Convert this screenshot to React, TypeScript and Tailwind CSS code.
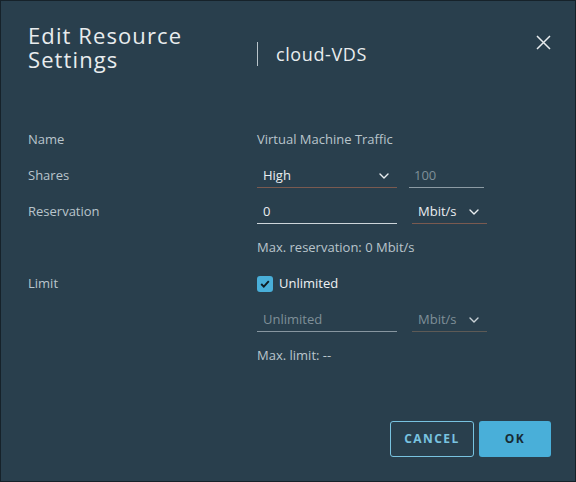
import React from "react";

const Chevron = ({ className = "" }: { className?: string }) => (
  <svg width="10" height="6" viewBox="0 0 10 6" className={className} fill="none">
    <path d="M1 1l4 4 4-4" stroke="currentColor" strokeWidth="1.4" strokeLinecap="round" strokeLinejoin="round" />
  </svg>
);

export default function App() {
  return (
    <div
      className="w-[576px] h-[482px] bg-[#293f4d] border border-[#16222a] flex flex-col text-[13px]"
      style={{ fontFamily: "'Open Sans', 'Noto Sans', sans-serif" }}
    >
      {/* Header */}
      <div className="flex items-start pl-[27px] pr-[24px] pt-[22px] h-[121px]">
        <div className="w-[229px] text-[22px] leading-[24px] tracking-[1.1px] text-[#e8ecee]">
          Edit Resource
          <br />
          Settings
        </div>
        <div className="flex items-center h-[24px] mt-[19px]">
          <div className="w-px h-[24px] bg-[#b9c4ca]" />
          <div className="ml-[18px] text-[18px] leading-[24px] tracking-[0.6px] text-[#e8ecee]">cloud-VDS</div>
        </div>
        <button className="ml-auto mt-[12px] text-[#e8ecee]">
          <svg width="15" height="15" viewBox="0 0 15 15" fill="none">
            <path d="M1 1l13 13M14 1L1 14" stroke="currentColor" strokeWidth="1.5" />
          </svg>
        </button>
      </div>

      {/* Form */}
      <div className="flex flex-col pl-[27px]">
        <div className="flex items-center h-9">
          <div className="w-[229px] text-[#b9c5cc]">Name</div>
          <div className="text-[#b9c5cc]">Virtual Machine Traffic</div>
        </div>

        <div className="flex items-center h-9">
          <div className="w-[229px] text-[#b9c5cc]">Shares</div>
          <div className="w-[140px] h-6 flex items-center justify-between pl-[6px] pr-[8px] border-b border-[#7a5a50] text-[#e9edf0]">
            <span>High</span>
            <Chevron />
          </div>
          <div className="ml-[12px] w-[75px] h-6 flex items-center pl-[5px] border-b border-[#8c9ba4] text-[#7f8f98]">
            100
          </div>
        </div>

        <div className="flex items-center h-9">
          <div className="w-[229px] text-[#b9c5cc]">Reservation</div>
          <div className="w-[140px] h-6 flex items-center pl-[6px] border-b border-[#cdd5da] text-[#e9edf0]">0</div>
          <div className="ml-[15px] w-[75px] h-6 flex items-center justify-between pl-[6px] pr-[8px] border-b border-[#7a5a50] text-[#e9edf0]">
            <span>Mbit/s</span>
            <Chevron />
          </div>
        </div>

        <div className="flex items-center h-9">
          <div className="w-[229px]" />
          <div className="text-[#b9c5cc]">Max. reservation: 0 Mbit/s</div>
        </div>

        <div className="flex items-center h-9">
          <div className="w-[229px] text-[#b9c5cc]">Limit</div>
          <div className="flex items-center">
            <div className="w-4 h-4 rounded-[3px] bg-[#49afd9] flex items-center justify-center">
              <svg width="10" height="8" viewBox="0 0 10 8" fill="none">
                <path d="M1.2 4l2.6 2.6L8.8 1.2" stroke="#0f1c23" strokeWidth="1.9" />
              </svg>
            </div>
            <span className="ml-[6px] text-[#eef1f3] font-medium">Unlimited</span>
          </div>
        </div>

        <div className="flex items-center h-9">
          <div className="w-[229px]" />
          <div className="w-[140px] h-6 flex items-center pl-[6px] border-b border-[#8796a0] text-[#7f8f98]">Unlimited</div>
          <div className="ml-[15px] w-[75px] h-6 flex items-center justify-between pl-[6px] pr-[8px] border-b border-[#5d5a56] text-[#7f8f98]">
            <span>Mbit/s</span>
            <Chevron className="text-[#c9d2d7]" />
          </div>
        </div>

        <div className="flex items-center h-9">
          <div className="w-[229px]" />
          <div className="text-[#b9c5cc]">Max. limit: --</div>
        </div>
      </div>

      {/* Footer */}
      <div className="mt-auto flex justify-end gap-[5px] pr-[24px] pb-[24px]">
        <button className="w-[84px] h-9 rounded-[3px] border border-[#79c3e0] text-[#79c3e0] text-[12px] font-bold tracking-[0.12em]">
          CANCEL
        </button>
        <button className="w-[72px] h-9 rounded-[3px] bg-[#49afd9] text-[#172a34] text-[12px] font-bold tracking-[0.12em]">
          OK
        </button>
      </div>
    </div>
  );
}
